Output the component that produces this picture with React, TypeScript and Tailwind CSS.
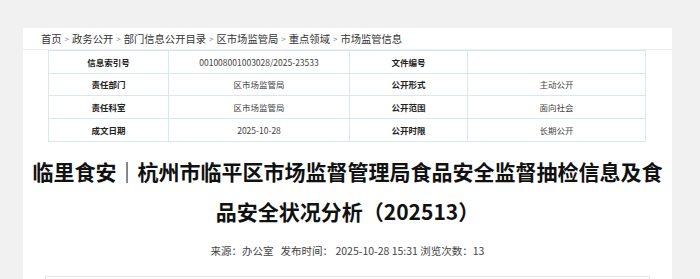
const crumbs = ['政务公开', '部门信息公开目录', '区市场监管局', '重点领域', '市场监管信息'];

const rows: [string, string, string, string][] = [
  ['信息索引号', '001008001003028/2025-23533', '文件编号', ''],
  ['责任部门', '区市场监管局', '公开形式', '主动公开'],
  ['责任科室', '区市场监管局', '公开范围', '面向社会'],
  ['成文日期', '2025-10-28', '公开时限', '长期公开'],
];

function Sep() {
  return <span className="mx-[3px] text-[8px] text-[#777] align-[1px]">&gt;</span>;
}

export default function App() {
  return (
    <div className="min-h-screen bg-[#f1f1f1] pt-[28px] font-['Noto_Sans_CJK_SC',sans-serif]">
      <div className="ml-[23px] w-[649px] bg-white">
        <div className="h-[22px] border-b border-[#ececec] pl-[18px] text-[10.3px] leading-[21px] text-[#333]">
          首页
          {crumbs.map((c) => (
            <span key={c}>
              <Sep />
              {c}
            </span>
          ))}
        </div>

        <div className="pl-[25px] pr-[27px]">
          <table className="w-[597px] table-fixed border-collapse text-[8.5px] leading-none">
            <colgroup>
              <col className="w-[120px]" />
              <col className="w-[181px]" />
              <col className="w-[118px]" />
              <col className="w-[178px]" />
            </colgroup>
            <tbody>
              {rows.map((r) => (
                <tr key={r[0]} className="h-[22.7px]">
                  <td className="border border-[#d9e6f6] text-center font-bold text-[#222]">{r[0]}</td>
                  <td className="border border-[#d9e6f6] text-center text-[#444]">{r[1]}</td>
                  <td className="border border-[#d9e6f6] text-center font-bold text-[#222]">{r[2]}</td>
                  <td className="border border-[#d9e6f6] text-center text-[#444]">{r[3]}</td>
                </tr>
              ))}
            </tbody>
          </table>
        </div>

        <h1 className="mt-[9px] text-center text-[21px] font-bold leading-[40px] text-[#111]">
          临里食安｜杭州市临平区市场监督管理局食品安全监督抽检信息及食
          <br />
          品安全状况分析（202513）
        </h1>

        <div className="mt-[12px] text-center text-[10.5px] leading-[16px] text-[#444]">
          来源：办公室&nbsp;&nbsp;&nbsp;发布时间： 2025-10-28 15:31 浏览次数：13
        </div>

        <div className="mx-[22px] mt-[17px] h-[60px] border border-[#e6e6e6]" />
      </div>
    </div>
  );
}
